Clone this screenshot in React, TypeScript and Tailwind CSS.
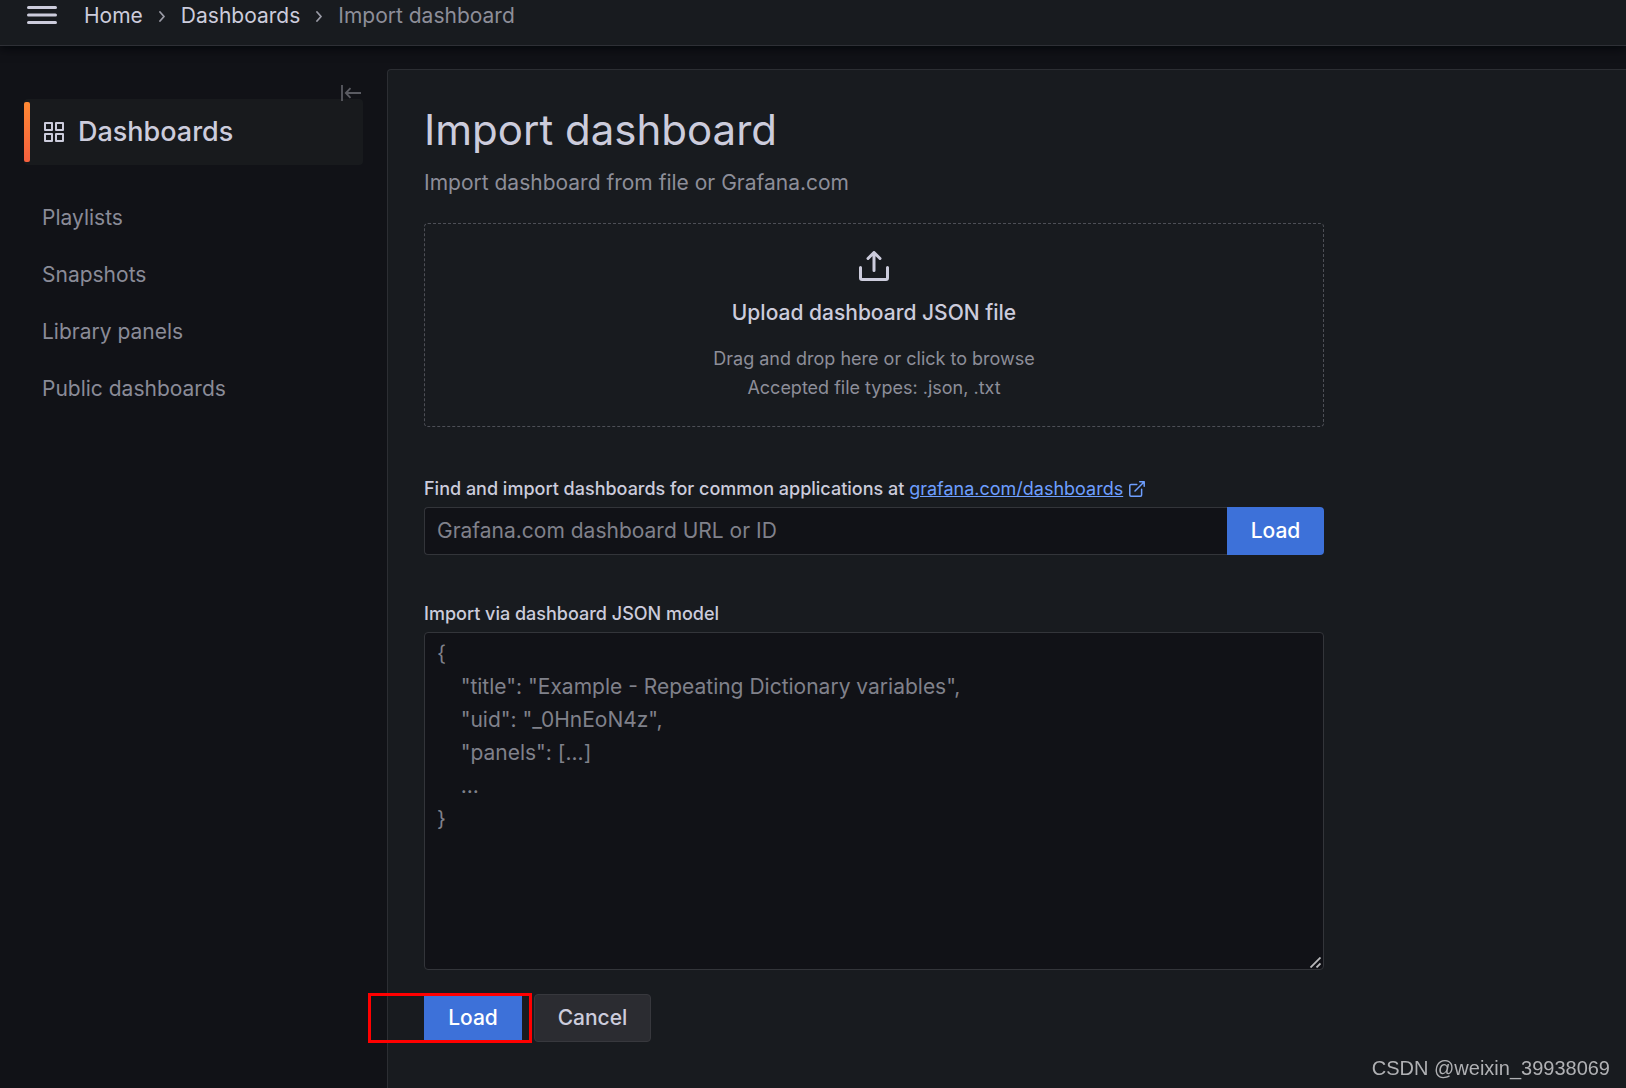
import React from 'react';

const links = ['Playlists', 'Snapshots', 'Library panels', 'Public dashboards'];

const jsonPlaceholder = `{
    "title": "Example - Repeating Dictionary variables",
    "uid": "_0HnEoN4z",
    "panels": [...]
    ...
}`;

function IconBars() {
  return (
    <svg width="30" height="18" viewBox="0 0 30 18" stroke="currentColor" strokeWidth="3" strokeLinecap="round">
      <path d="M1.5 1.5h27M1.5 9h27M1.5 16.5h27" />
    </svg>
  );
}

function IconChevron() {
  return (
    <svg width="6" height="11" viewBox="0 0 6 11" fill="none" stroke="currentColor" strokeWidth="1.8" strokeLinecap="round" strokeLinejoin="round">
      <path d="M1 1l4 4.5L1 10" />
    </svg>
  );
}

function IconApps() {
  return (
    <svg width="20" height="20" viewBox="0 0 20 20" fill="none" stroke="currentColor" strokeWidth="2" strokeLinejoin="round">
      <path d="M1 1h7v7H1zM12 1h7v7h-7zM1 12h7v7H1zM12 12h7v7h-7z" />
    </svg>
  );
}

function IconCollapse() {
  return (
    <svg width="20" height="16" viewBox="0 0 20 16" fill="none" stroke="currentColor" strokeWidth="1.8">
      <path d="M1 0v16M20 8H5M9.5 3.2L4.8 8l4.7 4.8" />
    </svg>
  );
}

function IconUpload() {
  return (
    <svg width="30" height="30" viewBox="0 0 30 30" fill="none" stroke="currentColor" strokeWidth="3" strokeLinecap="round" strokeLinejoin="round">
      <path d="M15 19.5V2M9 7.5l6-6 6 6" />
      <path d="M1.5 16.5V27a1.5 1.5 0 0 0 1.5 1.5h24a1.5 1.5 0 0 0 1.5-1.5V16.5" />
    </svg>
  );
}

function IconExternal() {
  return (
    <svg width="16" height="16" viewBox="0 0 16 16" fill="none" stroke="currentColor" strokeWidth="1.5" strokeLinecap="round" strokeLinejoin="round">
      <path d="M12.6 8.2V14a1.2 1.2 0 0 1-1.2 1.2H2A1.2 1.2 0 0 1 .8 14V4.6A1.2 1.2 0 0 1 2 3.4h5.8M10.7.8h4.5v4.5M15 1L6 10" />
    </svg>
  );
}

function IconGrip() {
  return (
    <svg width="11" height="11" viewBox="0 0 11 11" fill="none" stroke="currentColor" strokeWidth="1.8">
      <path d="M.5 10.5l10-10M6.5 10.5l4-4" />
    </svg>
  );
}

function Header() {
  return (
    <header className="relative z-10 flex items-center gap-[27px] h-[46px] pb-[13px] pl-[27px] border-b border-[#2e3036] bg-[#181b1f] shadow-[0_2px_10px_rgba(1,4,9,0.9)]">
      <button type="button" aria-label="Toggle menu" className="-mt-0.5 text-[#ccccdc]">
        <IconBars />
      </button>
      <nav aria-label="Breadcrumbs" className="flex items-center gap-4 text-[21px] leading-8 text-[#ccccdc]">
        <a href="#">Home</a>
        <span className="text-[#9a9ba6]"><IconChevron /></span>
        <a href="#">Dashboards</a>
        <span className="text-[#9a9ba6]"><IconChevron /></span>
        <span className="text-[#8d8e99]">Import dashboard</span>
      </nav>
    </header>
  );
}

function Sidebar() {
  return (
    <aside className="w-[387px] shrink-0 px-6 pt-[53px]">
      <div className="relative">
        <a href="#" className="flex items-center h-[66px] rounded-sm bg-[#181a1d] text-[#ccccdc]">
          <span className="w-1.5 h-[60px] rounded-xs bg-gradient-to-b from-[#ff8833] to-[#f55f3e]" />
          <span className="ml-3.5"><IconApps /></span>
          <span className="ml-3.5 text-[27px] font-medium">Dashboards</span>
        </a>
        <button type="button" aria-label="Collapse navigation" className="absolute right-0.5 -top-3.5 text-[#5a5b62]">
          <IconCollapse />
        </button>
      </div>
      <ul className="mt-6 text-[21px] text-[#8a8b97]">
        {links.map((label) => (
          <li key={label}>
            <a href="#" className="flex items-center h-[57px] pl-[18px]">{label}</a>
          </li>
        ))}
      </ul>
    </aside>
  );
}

export default function App() {
  return (
    <div className="flex flex-col min-h-screen bg-[#111217] font-['Inter',sans-serif]">
      <Header />
      <div className="flex flex-1">
        <Sidebar />
        <main className="flex-1 min-w-0 mt-[23px] px-9 pt-[35px] pb-10 border-l border-t border-[#2c2e33] rounded-tl-sm bg-[#181b1f]">
          <h1 className="text-[42px] leading-[50px] text-[#ccccdc]">Import dashboard</h1>
          <p className="mt-3 text-[21px] leading-8 text-[#8d8e99]">Import dashboard from file or Grafana.com</p>

          <form className="max-w-[900px] mt-6">
            <button
              type="button"
              className="flex flex-col items-center w-full h-[204px] pt-[27px] border border-dashed border-[#4d4f56] rounded-sm"
            >
              <span className="text-[#ccccdc]"><IconUpload /></span>
              <span className="mt-4 text-[21px] leading-8 font-medium text-[#ccccdc]">Upload dashboard JSON file</span>
              <span className="mt-[15px] text-lg leading-[29px] text-[#8d8e99]">
                Drag and drop here or click to browse
                <br />
                Accepted file types: .json, .txt
              </span>
            </button>

            <div className="mt-12 flex items-center text-lg leading-7 font-medium text-[#ccccdc]">
              <label htmlFor="gcom">Find and import dashboards for common applications at&nbsp;</label>
              <a href="#" className="flex items-center gap-1.5 font-normal text-[#6e9fff]">
                <span className="underline">grafana.com/dashboards</span>
                <IconExternal />
              </a>
            </div>
            <div className="mt-1 flex h-12">
              <input
                id="gcom"
                type="text"
                placeholder="Grafana.com dashboard URL or ID"
                className="flex-1 min-w-0 px-3 border border-r-0 border-[#33353a] rounded-l-sm bg-[#111217] text-[21px] text-[#ccccdc] placeholder:text-[#80818b]"
              />
              <button type="submit" className="w-[97px] rounded-r-sm bg-[#3d71d9] text-[21px] font-medium text-white">
                Load
              </button>
            </div>

            <label htmlFor="model" className="block mt-[45px] text-lg leading-7 font-medium text-[#ccccdc]">
              Import via dashboard JSON model
            </label>
            <div className="relative mt-1">
              <textarea
                id="model"
                placeholder={jsonPlaceholder}
                className="block w-full h-[338px] px-3 py-1 border border-[#33353a] rounded-sm bg-[#111217] text-[21px] leading-[33px] text-[#ccccdc] placeholder:text-[#80818b] resize-none"
              />
              <div className="absolute right-[3px] bottom-0.5 text-[#b9b9bb] pointer-events-none">
                <IconGrip />
              </div>
            </div>

            <div className="mt-6 flex gap-3 h-12">
              <div className="relative flex">
                <button type="submit" className="w-[98px] bg-[#3d71d9] text-[21px] font-medium text-white">
                  Load
                </button>
                <div className="absolute -left-14 -right-2.5 -top-px -bottom-px border-3 border-[#ff0000] pointer-events-none" />
              </div>
              <button type="button" className="w-[117px] border border-[#37383d] rounded-sm bg-[#2b2c31] text-[21px] font-medium text-[#ccccdc]">
                Cancel
              </button>
            </div>
          </form>
        </main>
      </div>
      <div className="fixed right-4 bottom-1.5 text-xl leading-7 font-['Liberation_Sans',sans-serif] text-[#b0b1b4]">
        CSDN @weixin_39938069
      </div>
    </div>
  );
}
